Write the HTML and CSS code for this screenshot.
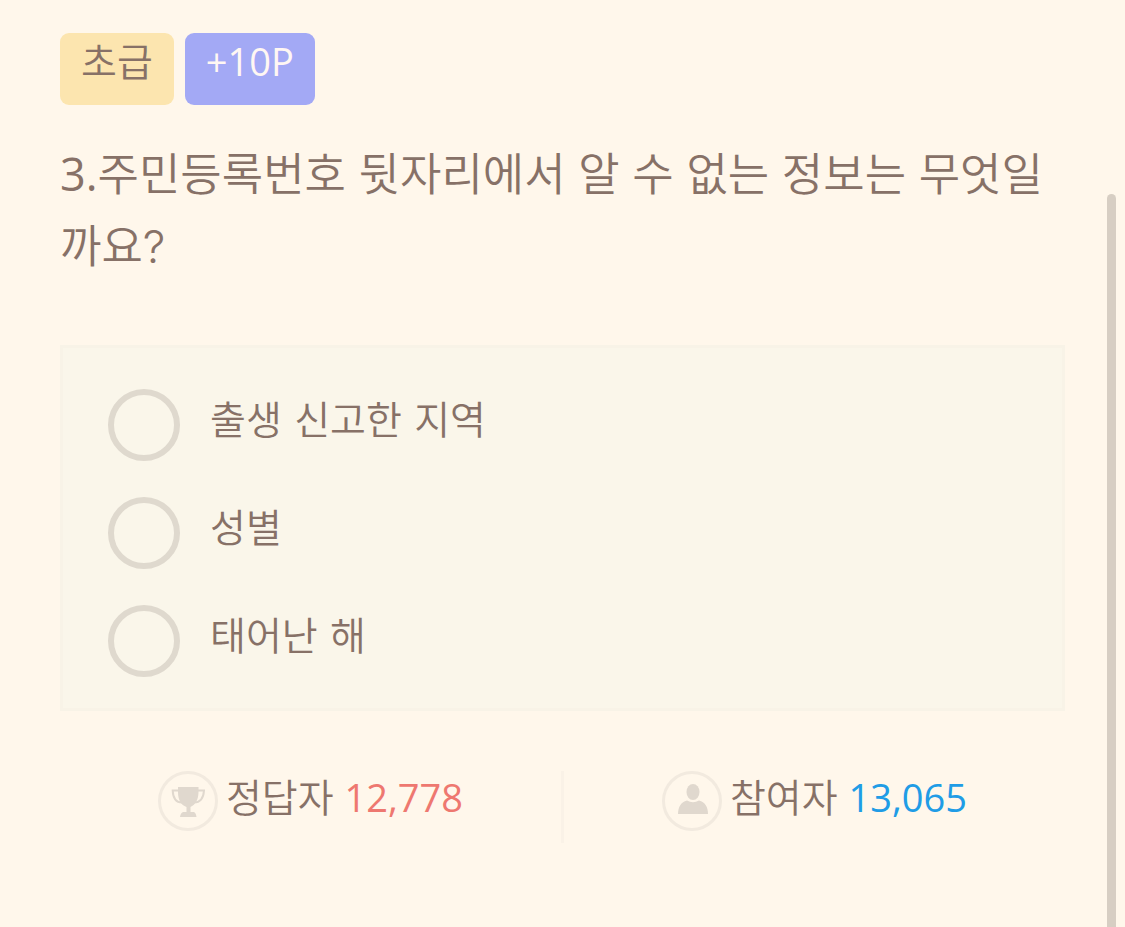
FILE: index.html
```html
<!DOCTYPE html>
<html lang="ko">
<head>
  <meta charset="UTF-8">
  <meta name="viewport" content="width=device-width, initial-scale=1">
  <title>퀴즈</title>
  <link rel="stylesheet" href="styles.css">
</head>
<body>
  <main class="quiz">
    <div class="badges">
      <span class="badge level">초급</span>
      <span class="badge point">+10P</span>
    </div>

    <h1 class="question" id="question"><span class="number">3.</span>주민등록번호 뒷자리에서 알 수 없는 정보는 무엇일까요?</h1>

    <form class="answers" aria-labelledby="question">
      <div class="answer">
        <input type="radio" id="answer1" name="answer" value="1">
        <label for="answer1">출생 신고한 지역</label>
      </div>
      <div class="answer">
        <input type="radio" id="answer2" name="answer" value="2">
        <label for="answer2">성별</label>
      </div>
      <div class="answer">
        <input type="radio" id="answer3" name="answer" value="3">
        <label for="answer3">태어난 해</label>
      </div>
    </form>

    <div class="stats">
      <div class="stat">
        <svg class="icon" viewBox="0 0 60 60" aria-hidden="true">
          <circle class="ring" cx="30" cy="30" r="28.5"/>
          <path class="handle" d="M21 19.5H14.7C15 27 18 31.5 24 31.5M39 19.5H46C45.5 27 42 31.5 36 31.5"/>
          <path class="shape" d="M20 16H40.5V21C40.5 29 37 34 32.5 36V41H36Q38 42 38.5 46H22Q22.5 42 25 41H28.5V36C23 34 20 29 20 21Z"/>
        </svg>
        <span>정답자 <span class="count correct">12,778</span></span>
      </div>
      <div class="stat">
        <svg class="icon" viewBox="0 0 60 60" aria-hidden="true">
          <circle class="ring" cx="30" cy="30" r="28.5"/>
          <ellipse class="shape" cx="31" cy="21" rx="6.5" ry="8"/>
          <path class="shape" d="M16 43C16 36 19 31 25 29.5Q31 33 37 29.5C43 31 46 36 46 43Z"/>
        </svg>
        <span>참여자 <span class="count joined">13,065</span></span>
      </div>
    </div>
  </main>
  <div class="scroll-thumb"></div>
</body>
</html>
```
FILE: styles.css
```css
* {
  box-sizing: border-box;
}

body {
  margin: 0;
  background-color: #fff7eb;
  color: #877167;
  font-family: "Noto Sans CJK KR", sans-serif;
  font-size: 39px;
  font-weight: 350;
}

.quiz {
  padding: 33px 60px 60px;
}

.badges {
  display: flex;
  gap: 11px;
}

.badge {
  height: 72px;
  padding: 0 21px;
  border-radius: 9px;
  line-height: 52px;
}

.level {
  background-color: #fce5af;
}

.point {
  background-color: #a3a9f5;
  color: #fff7f3;
  font-family: "Open Sans", sans-serif;
  font-size: 38px;
  font-weight: 400;
  line-height: 56px;
}

.question {
  margin: 34px 0 62px;
  font-family: Inter, "Noto Sans CJK KR", sans-serif;
  font-size: 45px;
  font-weight: 350;
  line-height: 72px;
  word-break: break-all;
}

.number {
  font-family: "Open Sans", sans-serif;
  font-weight: 400;
  line-height: 1;
}

.answers {
  padding: 41px 45px 31px;
  border: 3px solid #f8f3e7;
  background-color: #faf6ea;
  font-family: "DejaVu Sans", "Noto Sans CJK KR", sans-serif;
  line-height: 64px;
}

.answer {
  display: flex;
  gap: 30px;
  height: 72px;
  margin-bottom: 36px;
}

.answer:last-child {
  margin-bottom: 0;
}

.answer input {
  appearance: none;
  width: 72px;
  height: 72px;
  margin: 0;
  border: 6px solid #dfd9ce;
  border-radius: 50%;
}

.answer input:checked {
  background-color: #dfd9ce;
}

.stats {
  display: flex;
  margin-top: 60px;
}

.stat {
  display: flex;
  flex: 1;
  justify-content: center;
  gap: 8px;
  height: 72px;
  line-height: 48px;
}

.stat + .stat {
  border-left: 3px solid #faf2e7;
}

.icon {
  width: 60px;
  height: 60px;
}

.ring {
  fill: none;
  stroke: #f2eadf;
  stroke-width: 3;
}

.handle {
  fill: none;
  stroke: #e0d8ce;
  stroke-width: 2;
}

.shape {
  fill: #e0d8ce;
}

.count {
  font-family: "Open Sans", sans-serif;
  font-size: 38px;
  font-weight: 400;
  line-height: 1;
}

.correct {
  color: #ee7870;
}

.joined {
  color: #209ce6;
}

.scroll-thumb {
  position: fixed;
  top: 194px;
  right: 9px;
  bottom: -9px;
  width: 9px;
  border-radius: 5px;
  background-color: #d7cec3;
}
```
